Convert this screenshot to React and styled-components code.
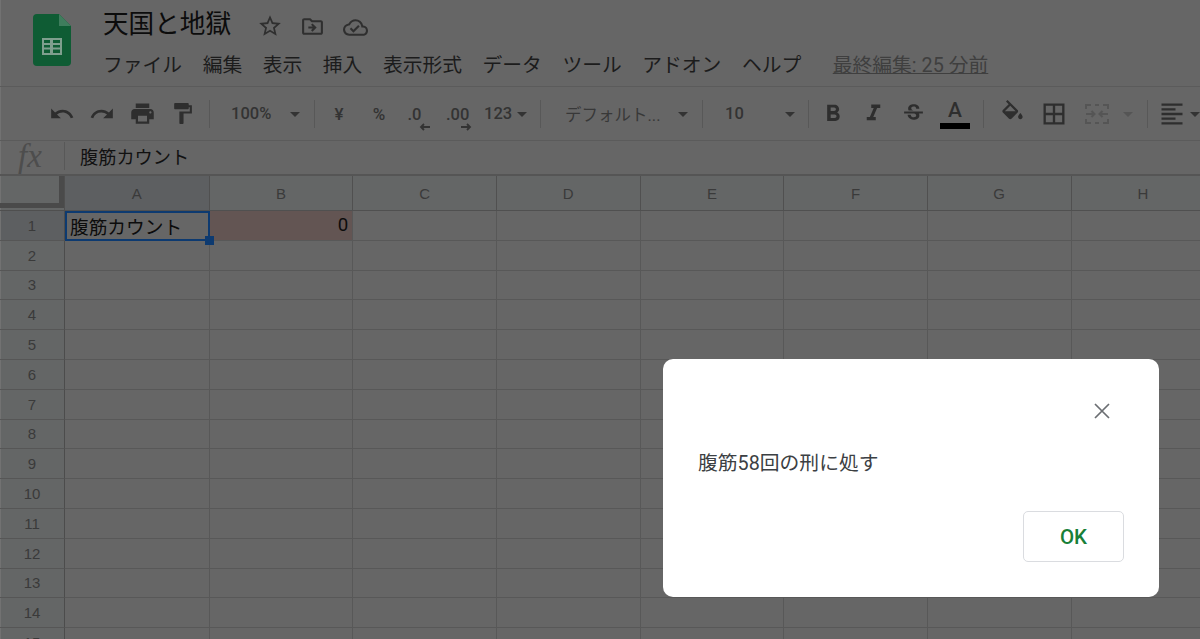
import React from 'react';
import styled, { createGlobalStyle } from 'styled-components';
import {
  MdUndo, MdRedo, MdPrint, MdFormatPaint, MdFormatBold, MdFormatItalic,
  MdStrikethroughS, MdBorderAll, MdFormatAlignLeft,
  MdStarBorder, MdOutlineDriveFileMove, MdOutlineCloudDone,
} from 'react-icons/md';

const JP = `Roboto, "Noto Sans CJK JP", sans-serif`;

const GlobalStyle = createGlobalStyle`
  html, body { margin: 0; padding: 0; background: #666; }
  #root { height: 639px; overflow: hidden; }
  * { box-sizing: border-box; }
`;

const Page = styled.div`
  position: relative;
  width: 1200px;
  height: 639px;
  overflow: hidden;
  background: #666;
  font-family: ${JP};
  box-shadow: inset 1px 0 #727272;
`;

const Header = styled.header`
  display: flex;
  height: 87px;
  padding: 7px 0 0 33px;
  border-bottom: 1px solid #5b5b5b;
`;

const Logo = styled.svg`
  width: 38px;
  height: 52px;
  margin-top: 7px;
  flex: none;
`;

const HeaderText = styled.div`
  margin-left: 32px;
  display: flex;
  flex-direction: column;
`;

const TitleRow = styled.div`
  display: flex;
  align-items: center;
  height: 34px;
  color: #2f2f2f;
`;

const Title = styled.h1`
  margin: 0 18px 0 0;
  font-size: 25.6px;
  font-weight: 400;
  line-height: 34px;
  color: #0c0c0c;
`;

const TitleIcon = styled.span`
  display: flex;
  width: 42px;
  justify-content: center;
  margin-top: ${p => p.$mt}px;
  margin-left: ${p => p.$ml || 0}px;
`;

const Menu = styled.nav`
  display: flex;
  align-items: center;
  gap: 20.5px;
  margin-top: 7px;
  font-size: 19.8px;
  line-height: 36px;
  color: #1c1c1c;
`;

const LastEdit = styled.a`
  margin-left: 11px;
  color: #3f3f3f;
  text-decoration: underline;
`;

const Toolbar = styled.div`
  display: flex;
  align-items: center;
  height: 54px;
  padding-left: 42px;
  border-bottom: 1px solid #5b5b5b;
  color: #2e2e2e;
`;

const ToolButton = styled.div`
  flex: none;
  display: flex;
  align-items: center;
  justify-content: center;
  width: ${p => p.$w || 40}px;
  color: ${p => (p.$muted ? '#555' : 'inherit')};
`;

const Sep = styled.div`
  flex: none;
  width: 1px;
  height: 28px;
  margin-left: ${p => p.$ml || 0}px;
  margin-right: ${p => p.$mr || 0}px;
  background: #585858;
`;

const Dropdown = styled.div`
  flex: none;
  display: flex;
  align-items: center;
  justify-content: space-between;
  width: ${p => p.$w}px;
  padding: 0 ${p => p.$pr}px 0 ${p => p.$pl}px;
  font-size: 16.5px;
  font-weight: ${p => (p.$light ? 400 : 500)};
  color: ${p => (p.$light ? '#383838' : '#333')};
`;

const Caret = styled.span`
  flex: none;
  display: inline-block;
  margin-left: ${p => p.$ml || 0}px;
  margin-top: 2px;
  border-left: 5px solid transparent;
  border-right: 5px solid transparent;
  border-top: 5px solid ${p => p.$color || '#333'};
`;

const Glyph = styled.span`
  font-size: 17px;
  font-weight: 500;
  color: #333;
`;

const Decimal = styled.span`
  display: flex;
  flex-direction: column;
  align-items: flex-start;
  font-size: 16.5px;
  font-weight: 500;
  line-height: 18px;
  color: #333;
  margin-top: 10px;
`;

const Arrow = styled.svg`
  width: 12px;
  height: 8px;
  margin-top: -1px;
  margin-left: ${p => p.$ml}px;
`;

const ColorA = styled.span`
  display: flex;
  flex-direction: column;
  align-items: center;
  font-size: 21px;
  font-weight: 500;
  line-height: 24px;
  margin-left: 4px;
  &::after {
    content: '';
    width: 30px;
    height: 6px;
    margin-top: 1px;
    background: #000;
  }
`;

const FormulaBar = styled.div`
  display: flex;
  align-items: center;
  height: 35px;
  padding-bottom: 3px;
  border-bottom: 2px solid #555;
`;

const Fx = styled.span`
  width: 64px;
  padding-left: 18px;
  font-family: "Liberation Serif", serif;
  font-style: italic;
  font-size: 33px;
  line-height: 30px;
  color: #4d4d4d;
`;

const FormulaText = styled.span`
  margin-left: 15px;
  font-size: 18.2px;
  color: #111;
`;

const Sheet = styled.div`
  display: grid;
  grid-template-columns: 65px 144.6px repeat(7, 143.67px);
  grid-template-rows: 35px repeat(15, 29.8px);
`;

const Corner = styled.div`
  background: #646666;
  border-right: 1px solid #4f4f4f;
  border-bottom: 1px solid #4f4f4f;
  box-shadow: inset 1px 0 #727272;
`;

const CornerBars = styled.div`
  height: 32px;
  border-right: 5px solid #4a4a4a;
  border-bottom: 5px solid #4a4a4a;
`;

const ColHead = styled.div`
  display: flex;
  align-items: center;
  justify-content: center;
  font-family: "Liberation Sans", sans-serif;
  font-size: 15px;
  color: #3a3a3a;
  background: ${p => (p.$active ? '#5d5f61' : '#646666')};
  border-right: 1px solid #505050;
  border-bottom: 1px solid #505050;
`;

const RowHead = styled.div`
  display: flex;
  align-items: center;
  justify-content: center;
  font-family: "Liberation Sans", sans-serif;
  font-size: 15px;
  color: #3a3a3a;
  background: ${p => (p.$active ? '#5d5f61' : '#646666')};
  border-right: 1px solid #4c4c4c;
  border-bottom: 1px solid #565656;
  box-shadow: inset 1px 0 #727272;
`;

const Cell = styled.div`
  display: flex;
  align-items: center;
  justify-content: ${p => (p.$right ? 'flex-end' : 'flex-start')};
  padding: 0 4px;
  font-size: 18.7px;
  color: #0c0c0c;
  background: ${p => p.$bg || 'transparent'};
  border-right: 1px solid #585858;
  border-bottom: 1px solid #585858;
`;

const SelectedCell = styled(Cell)`
  position: relative;
  border: 2px solid #0d3a70;
  padding: 0 3px;
  &::after {
    content: '';
    position: absolute;
    right: -6px;
    bottom: -6px;
    width: 9px;
    height: 9px;
    background: #0d3a70;
  }
`;

const Dialog = styled.div`
  position: absolute;
  left: 663px;
  top: 359px;
  width: 496px;
  height: 238px;
  padding: 44px 35px 35px 35px;
  display: flex;
  flex-direction: column;
  background: #fff;
  border-radius: 10px;
`;

const CloseIcon = styled.svg`
  align-self: flex-end;
  width: 16px;
  height: 16px;
  margin-right: 14px;
`;

const DialogText = styled.p`
  margin: 30px 0 0;
  font-size: 19.8px;
  line-height: 30px;
  color: #3c4043;
`;

const DialogActions = styled.div`
  display: flex;
  justify-content: flex-end;
  margin-top: auto;
`;

const OkButton = styled.button`
  width: 101px;
  height: 51px;
  padding: 0;
  background: #fff;
  border: 1px solid #dadce0;
  border-radius: 5px;
  font-family: ${JP};
  font-size: 20.5px;
  font-weight: 500;
  color: #188038;
`;

const menus = ['ファイル', '編集', '表示', '挿入', '表示形式', 'データ', 'ツール', 'アドオン', 'ヘルプ'];
const columns = ['A', 'B', 'C', 'D', 'E', 'F', 'G', 'H'];
const rows = Array.from({ length: 15 }, (_, i) => i + 1);

const SheetsLogo = () => (
  <Logo viewBox="0 0 38 52">
    <path d="M4 0h22l12 12v36a4 4 0 0 1-4 4H4a4 4 0 0 1-4-4V4a4 4 0 0 1 4-4z" fill="#0f5c34" />
    <path d="M26 0l12 12H26z" fill="#3f7d5d" />
    <path d="M9 24h20v17H9z M11 26v3h6v-3z M20 26v3h7v-3z M11 31v2.500h6V31z M20 31v2.500h7V31z M11 35.500V39h6v-3.500z M20 35.500V39h7v-3.500z" fill="#7f9f8e" fillRule="evenodd" />
  </Logo>
);

const MergeIcon = () => (
  <svg width="24" height="24" viewBox="0 0 24 24" fill="none" stroke="#555" strokeWidth="2">
    <path d="M1 7V3h5M10 3h4M18 3h5v4M1 17v4h5M10 21h4M18 21h5v-4" />
    <path d="M1 12h8M6.500 9l3 3-3 3M23 12h-8M17.500 9l-3 3 3 3" />
  </svg>
);

const FillIcon = () => (
  <svg width="27" height="27" viewBox="0 0 24 24" fill="currentColor">
    <path d="M16.56 8.94L7.62 0 6.21 1.41l2.38 2.38-5.15 5.15c-.59.59-.59 1.54 0 2.12l5.5 5.5c.29.29.68.44 1.06.44s.77-.15 1.06-.44l5.5-5.5c.59-.58.59-1.53 0-2.12zM5.210 10L10 5.210 14.790 10H5.210zM19 11.500s-2 2.170-2 3.500c0 1.100.9 2 2 2s2-.9 2-2c0-1.330-2-3.500-2-3.500z" />
  </svg>
);

function ToolbarRow() {
  return (
    <Toolbar>
      <ToolButton><MdUndo size={26} /></ToolButton>
      <ToolButton><MdRedo size={26} /></ToolButton>
      <ToolButton><MdPrint size={27} /></ToolButton>
      <ToolButton><MdFormatPaint size={25} /></ToolButton>
      <Sep $ml={7} />
      <Dropdown $w={104} $pl={21} $pr={14}>100%<Caret /></Dropdown>
      <Sep $mr={4} />
      <ToolButton><Glyph>¥</Glyph></ToolButton>
      <ToolButton><Glyph>%</Glyph></ToolButton>
      <ToolButton>
        <Decimal>.0
          <Arrow $ml={11} viewBox="0 0 12 8"><path d="M11 4H2M5 1L2 4l3 3" fill="none" stroke="#333" strokeWidth="1.800" /></Arrow>
        </Decimal>
      </ToolButton>
      <ToolButton>
        <Decimal>.00
          <Arrow $ml={14} viewBox="0 0 12 8"><path d="M1 4h9M7 1l3 3-3 3" fill="none" stroke="#333" strokeWidth="1.800" /></Arrow>
        </Decimal>
      </ToolButton>
      <Dropdown $w={61} $pl={5} $pr={13}>123<Caret /></Dropdown>
      <Sep />
      <Dropdown $w={161} $pl={24} $pr={14} $light>デフォルト...<Caret /></Dropdown>
      <Sep />
      <Dropdown $w={105} $pl={22} $pr={13}>10<Caret /></Dropdown>
      <Sep $mr={4} />
      <ToolButton><MdFormatBold size={28} /></ToolButton>
      <ToolButton><MdFormatItalic size={27} /></ToolButton>
      <ToolButton><MdStrikethroughS size={25} /></ToolButton>
      <ToolButton><ColorA>A</ColorA></ToolButton>
      <Sep $ml={10} $mr={7} />
      <ToolButton $w={42}><FillIcon /></ToolButton>
      <ToolButton $w={42}><MdBorderAll size={28} /></ToolButton>
      <ToolButton $w={43}><MergeIcon /></ToolButton>
      <Caret $ml={5} $color="#555" />
      <Sep $ml={14} $mr={4} />
      <ToolButton><MdFormatAlignLeft size={28} /></ToolButton>
      <Caret $ml={-2} />
    </Toolbar>
  );
}

export default function App() {
  return (
    <Page>
      <GlobalStyle />
      <Header>
        <SheetsLogo />
        <HeaderText>
          <TitleRow>
            <Title>天国と地獄</Title>
            <TitleIcon $mt={3}><MdStarBorder size={26} /></TitleIcon>
            <TitleIcon $mt={4} $ml={1}><MdOutlineDriveFileMove size={25} /></TitleIcon>
            <TitleIcon $mt={6} $ml={1}><MdOutlineCloudDone size={25} /></TitleIcon>
          </TitleRow>
          <Menu>
            {menus.map(m => <span key={m}>{m}</span>)}
            <LastEdit>最終編集: 25 分前</LastEdit>
          </Menu>
        </HeaderText>
      </Header>
      <ToolbarRow />
      <FormulaBar>
        <Fx>fx</Fx>
        <Sep />
        <FormulaText>腹筋カウント</FormulaText>
      </FormulaBar>
      <Sheet>
        <Corner><CornerBars /></Corner>
        {columns.map(c => <ColHead key={c} $active={c === 'A'}>{c}</ColHead>)}
        {rows.map(r => (
          <React.Fragment key={r}>
            <RowHead $active={r === 1}>{r}</RowHead>
            {columns.map(c => {
              if (r === 1 && c === 'A') return <SelectedCell key={c}>腹筋カウント</SelectedCell>;
              if (r === 1 && c === 'B') return <Cell key={c} $right $bg="#635553">0</Cell>;
              return <Cell key={c} />;
            })}
          </React.Fragment>
        ))}
      </Sheet>
      <Dialog>
        <CloseIcon viewBox="0 0 16 16">
          <path d="M1 1l14 14M15 1L1 15" stroke="#6b6e72" strokeWidth="1.700" fill="none" />
        </CloseIcon>
        <DialogText>腹筋58回の刑に処す</DialogText>
        <DialogActions>
          <OkButton>OK</OkButton>
        </DialogActions>
      </Dialog>
    </Page>
  );
}
